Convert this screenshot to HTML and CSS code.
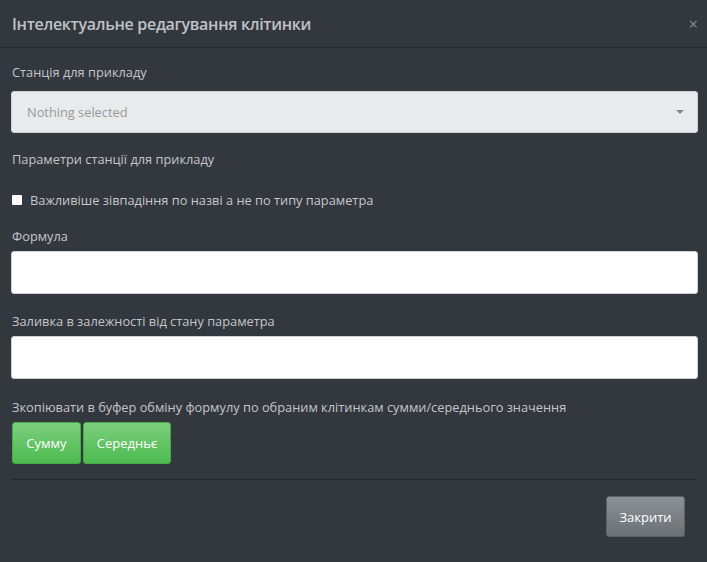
FILE: index.html
```html
<!DOCTYPE html>
<html lang="uk">
<head>
<meta charset="utf-8">
<link rel="stylesheet" href="styles.css">
</head>
<body>
<div class="modal">
  <div class="modal-header">
    <h4 class="modal-title">Інтелектуальне редагування клітинки</h4>
    <span class="close">×</span>
  </div>
  <div class="modal-body">
    <div class="group">
      <label class="lbl lbl-select">Станція для прикладу</label>
      <div class="select">
        <span class="placeholder">Nothing selected</span>
        <span class="caret"></span>
      </div>
    </div>
    <div class="group">
      <label class="lbl">Параметри станції для прикладу</label>
    </div>
    <div class="check-row">
      <span class="checkbox"></span>
      <span class="check-text">Важливіше зівпадіння по назві а не по типу параметра</span>
    </div>
    <div class="group">
      <label class="lbl">Формула</label>
      <div class="input"></div>
    </div>
    <div class="group">
      <label class="lbl">Заливка в залежності від стану параметра</label>
      <div class="input"></div>
    </div>
    <div class="group">
      <label class="lbl lbl-copy">Зкопіювати в буфер обміну формулу по обраним клітинкам сумми/середнього значення</label>
      <div class="btn-row">
        <button class="btn btn-green btn-sum">Сумму</button>
        <button class="btn btn-green btn-avg">Середньє</button>
      </div>
    </div>
  </div>
  <div class="modal-footer">
    <button class="btn btn-gray">Закрити</button>
  </div>
</div>
</body>
</html>
```
FILE: styles.css
```css
html, body {
  margin: 0;
  padding: 0;
  background: #33373e;
  font-family: "Open Sans", "Noto Sans", sans-serif;
  font-size: 12.8px;
  color: #c6c8cb;
}
.modal {
  width: 707px;
  height: 562px;
  box-sizing: border-box;
}
.modal-header {
  height: 48px;
  box-sizing: border-box;
  border-bottom: 1px solid #272a2f;
  display: flex;
  align-items: center;
  justify-content: space-between;
  padding: 0 9px 0 12px;
}
.modal-title {
  margin: 0;
  font-size: 16px;
  font-weight: 600;
  color: #bfc2c6;
  letter-spacing: -0.3px;
}
.close {
  color: #8a8e94;
  font-size: 16px;
}
.modal-body {
  padding: 15px 9px 0 11px;
}
.group {
  display: flex;
  flex-direction: column;
}
.lbl {
  display: block;
  line-height: 18px;
  margin: 0 0 6px 1px;
  color: #c4c6c9;
}
.lbl-select {
  margin-bottom: 10px;
}
.lbl-copy {
  margin-top: 1px;
}
.select {
  height: 42px;
  box-sizing: border-box;
  background: #e8eaec;
  border: 1px solid #cfd2d5;
  border-radius: 3px;
  display: flex;
  align-items: center;
  justify-content: space-between;
  padding: 0 13px 0 15px;
  margin-bottom: 17px;
}
.placeholder {
  color: #999;
}
.caret {
  width: 0;
  height: 0;
  border-left: 4px solid transparent;
  border-right: 4px solid transparent;
  border-top: 4px solid #888;
}
.check-row {
  display: flex;
  align-items: center;
  margin: 17px 0 18px 1px;
}
.checkbox {
  width: 10px;
  height: 10px;
  background: #fff;
  border-radius: 1px;
  margin-right: 8px;
}
.check-text {
  line-height: 18px;
}
.input {
  height: 43px;
  box-sizing: border-box;
  background: #fff;
  border: 1px solid #cdd1d6;
  border-radius: 3px;
  margin-bottom: 18px;
}
.btn-row {
  display: flex;
  gap: 2px;
  margin-left: 1px;
  padding-bottom: 15px;
  border-bottom: 1px solid #24272c;
}
.btn {
  font-family: "Open Sans", "Noto Sans", sans-serif;
  font-size: 13px;
  color: #fff;
  border-radius: 3px;
  height: 42px;
  padding: 0;
  cursor: pointer;
}
.btn-green {
  background: linear-gradient(#7ccf7e, #4cba4f);
  border: 1px solid #4aa84c;
}
.btn-sum {
  width: 69px;
}
.btn-avg {
  width: 88px;
}
.modal-footer {
  display: flex;
  justify-content: flex-end;
  padding: 16px 22px 0 0;
}
.btn-gray {
  width: 79px;
  height: 41px;
  background: linear-gradient(#8b9196, #6b7075);
  border: 1px solid #5e6368;
}
```
